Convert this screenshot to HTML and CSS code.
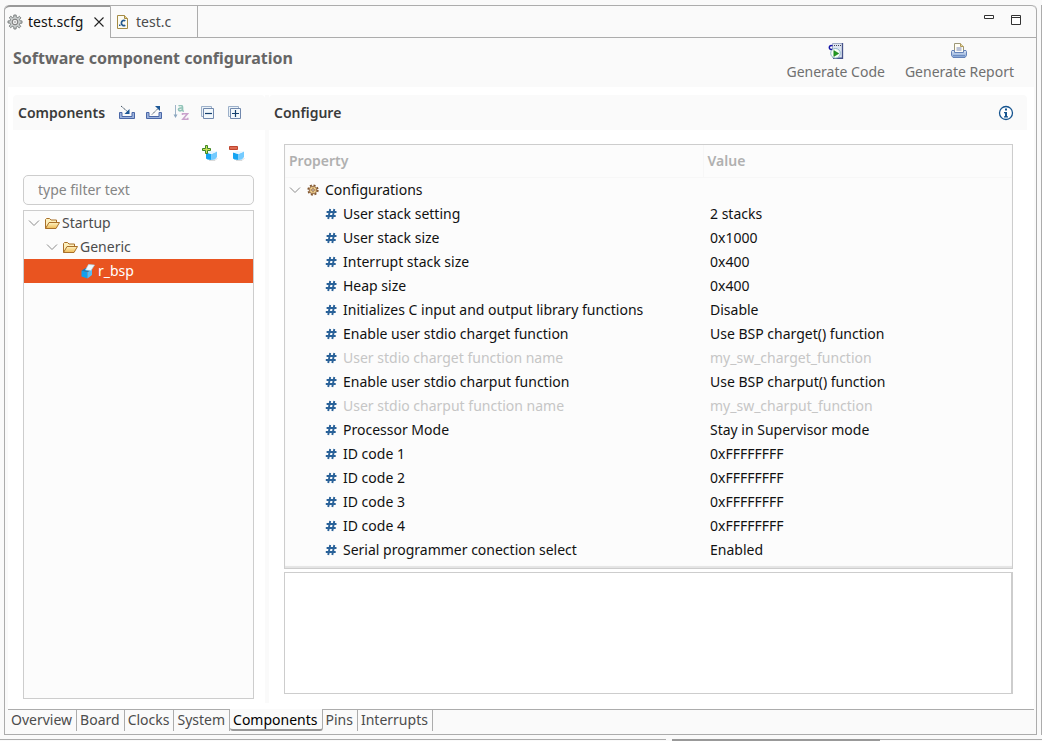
FILE: index.html
```html
<!DOCTYPE html>
<html lang="en">
<head>
<meta charset="utf-8">
<title>test.scfg</title>
<link rel="stylesheet" href="styles.css">
</head>
<body>
<svg class="defs" aria-hidden="true">
  <defs>
    <linearGradient id="folderFill" x1="0" y1="0" x2="0" y2="1"><stop offset="0" stop-color="#fff3c4"/><stop offset="1" stop-color="#eebb55"/></linearGradient>
    <linearGradient id="printFill" x1="0" y1="0" x2="0" y2="1"><stop offset="0" stop-color="#dfe8f6"/><stop offset="1" stop-color="#7d9fd2"/></linearGradient>
    <symbol id="chevron" viewBox="0 0 12 12"><path d="M1 3.5 6 8.5 11 3.5" fill="none" stroke="#8c8c8c"/></symbol>
    <symbol id="hash" viewBox="0 0 12 12"><path d="M5.200 1 3.200 11M9.300 1 7.300 11M1.600 4h9.900M.8 8h9.900" fill="none" stroke="#2a6299" stroke-width="1.900"/></symbol>
    <symbol id="folder" viewBox="0 0 16 16"><path d="M1.500 13.500v-9l1-1h3l1.500 1.500h5.500v2.500" fill="#fdf0bd" stroke="#a9702a"/><path d="M1.500 13.500 5 7.500h10.500l-3.500 6z" fill="url(#folderFill)" stroke="#a9702a"/></symbol>
    <symbol id="sheets-minus" viewBox="0 0 16 16"><path d="M4 11.500H1.500v-10h10V4" fill="#eaf2f8" stroke="#9db0c9"/><path d="M3.500 3.500h10v10h-10z" fill="#f2f8fc" stroke="#7188ad"/><path d="M5 8.500h7" stroke="#14406e" stroke-width="1.200"/></symbol>
    <symbol id="sheets-plus" viewBox="0 0 16 16"><path d="M4 11.500H1.500v-10h10V4" fill="#eaf2f8" stroke="#9db0c9"/><path d="M3.500 3.500h10v10h-10z" fill="#f2f8fc" stroke="#7188ad"/><path d="M5 8.500h7M8.500 5v7" stroke="#14406e" stroke-width="1.200"/></symbol>
    <symbol id="tray" viewBox="0 0 16 16"><path d="M.5 7.500h2.500v4h10v-4h2.500v6H.5z" fill="#9bb2dc" stroke="#4a67a6"/></symbol>
    <symbol id="box" viewBox="0 0 16 16"><path d="M4 7.500 9.500 9v6L5.500 14.500 4 13.500z" fill="#14a4f2"/><path d="m9.500 9 5.500-2.500V12l-2 2.500-3.500.5z" fill="#74cbff"/><path d="m4 7.500 4-1.500 7 .5L9.500 9z" fill="#e8f6ff"/><path d="M7 15.500h6l2.500-2.500" fill="none" stroke="#ccc" stroke-width=".7"/></symbol>
  </defs>
</svg>

<div class="workbench">
  <div class="upper">
    <main class="editor">
      <div class="tabbar">
        <div class="file-tab active">
          <svg class="icon" viewBox="0 0 16 16"><path d="M6.800 1h2.400v2l1.700.7 1.500-1.400 1.500 1.600-1.400 1.500.7 1.500H15v2.300h-2l-.6 1.600 1.400 1.500-1.600 1.600-1.500-1.400-1.600.7V15H6.900v-2l-1.700-.7-1.500 1.400-1.500-1.600 1.300-1.500L2.900 9H1V6.900h2l.6-1.700-1.400-1.400 1.600-1.600 1.500 1.400L6.800 3z" fill="#c9cdcd" stroke="#747979" stroke-width=".9"/><circle cx="8" cy="8" r="2.800" fill="#eee" stroke="#777"/><circle cx="8" cy="8" r=".8" fill="#888"/></svg>
          <span>test.scfg</span>
          <button class="plain" aria-label="Close"><svg class="close" viewBox="0 0 10 10"><path d="m.5.5 9 9m0-9-9 9" stroke="#222" stroke-width="1.100"/></svg></button>
        </div>
        <div class="file-tab">
          <svg class="icon" viewBox="0 0 16 16"><path d="M2.500 1.500h7l3 3v10h-10z" fill="#fcfbf2" stroke="#a48b45"/><path d="M9.500 1.500v3h3" fill="#e9d38c" stroke="#a48b45"/><path d="M10.300 6.900C8.200 5.500 6.400 7 6.400 9s1.800 3.500 3.900 2.200" fill="none" stroke="#24598f" stroke-width="1.700"/><path d="M4 10.500h1.500V12H4z" fill="#24598f"/></svg>
          <span>test.c</span>
        </div>
        <div class="tab-fill">
          <button class="plain" aria-label="Minimize"><svg class="win" viewBox="0 0 12 12"><path d="M1.500 1.500h9v3h-9z" fill="#fff" stroke="#333"/></svg></button>
          <button class="plain" aria-label="Maximize"><svg class="win" viewBox="0 0 12 12"><path d="M1.500 1.500h9v9h-9zM1 3.500h10" fill="#fff" stroke="#333"/></svg></button>
        </div>
      </div>

      <header class="form-head">
        <h1>Software component configuration</h1>
        <div class="actions">
          <button class="action">
            <svg class="icon" viewBox="0 0 16 16"><path d="M4.500.5h10v14h-10z" fill="#dce4f0" stroke="#a3acc8"/><path d="M14.500 0v15.500H5" fill="none" stroke="#46528a" stroke-width="1.300"/><path d="M6 2.500h7" stroke="#445" stroke-dasharray="1 1"/><path d="M4.500 3C3 2 1.300 2.800 1.300 4.500S3 7 4.500 6" fill="none" stroke="#1616a8" stroke-width="1.500"/><circle cx="7.500" cy="10.300" r="4.800" fill="#f7fff4" stroke="#8fb5c9"/><path d="m5.800 7.500 5 3-5 3z" fill="#219a1c" stroke="#0f7014" stroke-width=".5"/></svg>
            Generate Code
          </button>
          <button class="action">
            <svg class="icon" viewBox="0 0 16 16"><path d="M3.500 8.500v-8h6l3 3v5" fill="#fffdf4" stroke="#9c9676"/><path d="M9.500.5v3h3" fill="#ead99d" stroke="#b09a5c"/><path d="M5.500 5h5M5.500 7h5" stroke="#7486b8"/><path d="M1 7.500h2.500v2h9v-2H15l.5 1v4L14 14.500H2L.5 12.500v-4z" fill="url(#printFill)" stroke="#6583b9"/><path d="M2 12.500h12" stroke="#5c7cb5" stroke-width=".7"/></svg>
            Generate Report
          </button>
        </div>
      </header>

      <div class="form-body">
        <section class="pane components">
          <div class="section-head">
            <h2>Components</h2>
            <div class="tools">
              <button class="plain" aria-label="Import"><svg class="icon" viewBox="0 0 16 16"><use href="#tray"/><path d="m2 1 7 6" stroke="#456" stroke-dasharray="1.500 .5"/><path d="M10.500 4v5h-5z" fill="#1d5795"/></svg></button>
              <button class="plain" aria-label="Export"><svg class="icon" viewBox="0 0 16 16"><use href="#tray"/><path d="m6 9.500 6-6" stroke="#456" stroke-dasharray="1.500 .5"/><path d="M9 1h5v5z" fill="#1d5795"/></svg></button>
              <button class="plain" aria-label="Sort"><svg class="icon" viewBox="0 0 16 16"><path d="M2.500 0v11" stroke="#9fb4c8"/><path d="M.5 9.500h4l-2 3.500z" fill="#8aa5bf"/><path d="M5.500.8c3-.9 4-.2 4 1.700v3.500M9.500 3C7 2.800 5.500 3.400 5.500 4.600c0 1.800 2.500 1.500 4 .3M9.500 6.200h1.300" fill="none" stroke="#92c4b8" stroke-width="1.700"/><path d="M9.500 10V8.800h5L9.800 14.200h5V12.700" fill="none" stroke="#c9a3cc" stroke-width="1.500"/></svg></button>
              <button class="plain" aria-label="Collapse all"><svg class="icon"><use href="#sheets-minus"/></svg></button>
              <button class="plain" aria-label="Expand all"><svg class="icon"><use href="#sheets-plus"/></svg></button>
            </div>
          </div>
          <div class="pane-content">
            <div class="tools edit-tools">
              <button class="plain" aria-label="Add component"><svg class="icon" viewBox="0 0 16 16"><use href="#box"/><path d="M3.500.5h2V3.500H8.500v2h-3v3h-2v-3h-3v-2h3z" fill="#c6df55" stroke="#3f8726"/></svg></button>
              <button class="plain" aria-label="Remove component"><svg class="icon" viewBox="0 0 16 16"><use href="#box"/><path d="M.5 1.500h8v3h-8z" fill="#dd6a52" stroke="#bf452f"/></svg></button>
            </div>
            <input class="filter" type="text" placeholder="type filter text" aria-label="Filter components">
            <ul class="tree">
              <li class="node"><svg class="chev"><use href="#chevron"/></svg><svg class="icon"><use href="#folder"/></svg>Startup</li>
              <li class="node level-2"><svg class="chev"><use href="#chevron"/></svg><svg class="icon"><use href="#folder"/></svg>Generic</li>
              <li class="node level-3 selected"><svg class="icon" viewBox="0 0 16 16"><path d="m1.500 7.500 6 1.500v6.500l-6-2z" fill="#12a0ec"/><path d="m7.500 9 4.500-2.500V12l-4.500 3.500z" fill="#55bdf6"/><path d="m1.500 7.500 4.500-2.500 6 1.500L7.500 9z" fill="#0b7fc4"/><path d="M5.500 7 8.500 1.500 14.500 2 11 7.500z" fill="#eef9ff" stroke="#a8dcf7" stroke-width=".6"/></svg>r_bsp</li>
            </ul>
          </div>
        </section>

        <div class="sash"></div>

        <section class="pane configure">
          <div class="section-head">
            <h2>Configure</h2>
            <button class="plain" aria-label="Help"><svg class="icon" viewBox="0 0 16 16"><circle cx="8" cy="8" r="6.500" fill="#fff" stroke="#16548f" stroke-width="1.300"/><path d="M7 3.500h2v2H7zM6 7h3v4.200h1v1.300H6v-1.300h1V8.300H6z" fill="#16548f"/></svg></button>
          </div>
          <div class="pane-content">
            <div class="grid-box">
              <table class="props">
                <thead><tr><th class="name">Property</th><th>Value</th></tr></thead>
                <tbody>
                  <tr><td><div class="cell group"><svg class="chev"><use href="#chevron"/></svg><svg class="cog" viewBox="0 0 12 12"><circle cx="6" cy="6" r="4.800" fill="none" stroke="#81552d" stroke-width="1.700" stroke-dasharray="2 1.770"/><circle cx="6" cy="6" r="3.800" fill="#efd293" stroke="#7d5130" stroke-width=".8"/><path d="M6 2.500v7M2.500 6h7" stroke="#a87a42" stroke-width=".6"/><circle cx="6" cy="6" r="1.200" fill="#fff" stroke="#7d5130" stroke-width=".8"/></svg>Configurations</div></td><td></td></tr>
                  <tr><td><div class="cell"><svg class="hash"><use href="#hash"/></svg>User stack setting</div></td><td>2 stacks</td></tr>
                  <tr><td><div class="cell"><svg class="hash"><use href="#hash"/></svg>User stack size</div></td><td>0x1000</td></tr>
                  <tr><td><div class="cell"><svg class="hash"><use href="#hash"/></svg>Interrupt stack size</div></td><td>0x400</td></tr>
                  <tr><td><div class="cell"><svg class="hash"><use href="#hash"/></svg>Heap size</div></td><td>0x400</td></tr>
                  <tr><td><div class="cell"><svg class="hash"><use href="#hash"/></svg>Initializes C input and output library functions</div></td><td>Disable</td></tr>
                  <tr><td><div class="cell"><svg class="hash"><use href="#hash"/></svg>Enable user stdio charget function</div></td><td>Use BSP charget() function</td></tr>
                  <tr class="off"><td><div class="cell"><svg class="hash"><use href="#hash"/></svg>User stdio charget function name</div></td><td>my_sw_charget_function</td></tr>
                  <tr><td><div class="cell"><svg class="hash"><use href="#hash"/></svg>Enable user stdio charput function</div></td><td>Use BSP charput() function</td></tr>
                  <tr class="off"><td><div class="cell"><svg class="hash"><use href="#hash"/></svg>User stdio charput function name</div></td><td>my_sw_charput_function</td></tr>
                  <tr><td><div class="cell"><svg class="hash"><use href="#hash"/></svg>Processor Mode</div></td><td>Stay in Supervisor mode</td></tr>
                  <tr><td><div class="cell"><svg class="hash"><use href="#hash"/></svg>ID code 1</div></td><td>0xFFFFFFFF</td></tr>
                  <tr><td><div class="cell"><svg class="hash"><use href="#hash"/></svg>ID code 2</div></td><td>0xFFFFFFFF</td></tr>
                  <tr><td><div class="cell"><svg class="hash"><use href="#hash"/></svg>ID code 3</div></td><td>0xFFFFFFFF</td></tr>
                  <tr><td><div class="cell"><svg class="hash"><use href="#hash"/></svg>ID code 4</div></td><td>0xFFFFFFFF</td></tr>
                  <tr><td><div class="cell"><svg class="hash"><use href="#hash"/></svg>Serial programmer conection select</div></td><td>Enabled</td></tr>
                  <tr><td><div class="cell"><svg class="hash"><use href="#hash"/></svg>ROM cache enable setting</div></td><td>Disabled</td></tr>
                </tbody>
              </table>
            </div>
            <div class="description"></div>
          </div>
        </section>
      </div>

      <nav class="pages">
        <a href="#overview">Overview</a><a href="#board">Board</a><a href="#clocks">Clocks</a><a href="#system">System</a><a class="current" href="#components">Components</a><a href="#pins">Pins</a><a href="#interrupts">Interrupts</a>
      </nav>
    </main>
    <div class="side"></div>
  </div>
  <div class="lower"><div class="lower-left"></div><div class="lower-tab"></div><div class="lower-fill"></div></div>
</div>
</body>
</html>
```

FILE: styles.css
```css
* { box-sizing: border-box; }

body {
  margin: 0;
  background: #fafafa;
  color: #4c4c4c;
  font: 14px/24px "Noto Sans", "Open Sans", sans-serif;
}

h1, h2 { margin: 0; font-weight: 600; }

svg { display: block; flex: none; }
.defs { position: absolute; width: 0; height: 0; }
.icon { width: 16px; height: 16px; }
.chev, .hash, .cog, .win { width: 12px; height: 12px; }
.close { width: 10px; height: 10px; }

.plain, .action {
  padding: 0;
  border: 0;
  background: none;
  color: inherit;
  font: inherit;
}

.workbench { display: flex; flex-direction: column; height: 100vh; overflow: hidden; }
.upper { display: flex; flex: 1; gap: 4px; min-height: 0; padding: 5px 0 4px 4px; }

.editor {
  display: flex;
  flex: 1;
  flex-direction: column;
  min-width: 0;
  border: 1px solid #acacac;
  border-top: 0;
  border-radius: 5px 5px 0 0;
}

.side { width: 1px; background: #acacac; }

.tabbar { display: flex; height: 33px; }
.file-tab {
  display: flex;
  align-items: center;
  gap: 5px;
  width: 87px;
  padding-left: 4px;
  border: solid #acacac;
  border-width: 1px 1px 1px 0;
}
.file-tab.active {
  width: 106px;
  padding: 0 0 2px 2px;
  border-top: 2px solid #999;
  border-bottom: 0;
  border-top-left-radius: 5px;
  color: #111;
}
.file-tab.active .plain { margin-left: 6px; }
.tab-fill {
  display: flex;
  flex: 1;
  align-items: center;
  justify-content: flex-end;
  gap: 15px;
  padding: 0 14px 4px 0;
  border: solid #acacac;
  border-width: 1px 0;
  border-top-right-radius: 5px;
}

.form-head { display: flex; justify-content: space-between; height: 49px; padding: 5px 22px 0 8px; }
.form-head h1 { padding-top: 3px; color: #666; font-size: 16px; font-weight: 700; }
.actions { display: flex; gap: 20px; }
.action {
  display: flex;
  flex-direction: column;
  gap: 1px;
  align-items: center;
  color: #707070;
}

.form-body { display: flex; flex: 1; min-height: 0; margin: 0 2px 0 3px; padding: 8px 7px 6px 5px; background: #fff; }
.pane { display: flex; flex-direction: column; min-width: 0; }
.components { width: 252px; }
.configure { flex: 1; }
.sash { width: 4px; background: #fafafa; }

.section-head {
  display: flex;
  align-items: center;
  height: 35px;
  padding: 0 13px 0 5px;
  border-radius: 4px 4px 0 0;
  background: #fafafa;
}
.section-head h2 { color: #3a3a3a; font-size: 14px; }
.components .section-head { gap: 14px; }
.configure .section-head { justify-content: space-between; }
.tools { display: flex; gap: 11px; }

.pane-content { display: flex; flex: 1; flex-direction: column; min-height: 0; }
.components .pane-content { padding: 15px 11px 4px 10px; }
.configure .pane-content { gap: 3px; padding: 14px 14px 9px 15px; }

.edit-tools { justify-content: flex-end; padding-right: 9px; }
.filter {
  height: 30px;
  margin: 14px 0 5px;
  padding: 0 14px 2px;
  border: 1px solid #cdcdcd;
  border-radius: 5px;
  background: #fcfcfc;
  color: #444;
  font: inherit;
}
.filter::placeholder { color: #858585; opacity: 1; }

.tree {
  flex: 1;
  min-height: 0;
  margin: 0;
  padding: 0;
  border: 1px solid #cdcdcd;
  background: #fcfcfc;
  list-style: none;
}
.node { display: flex; align-items: center; height: 24px; padding-left: 4px; }
.node .chev { margin-right: 4px; }
.node .icon { margin-right: 2px; }
.level-2 { padding-left: 22px; }
.level-3 { padding-left: 56px; }
.selected { background: #e95420; color: #fff; }

.grid-box {
  flex: 1;
  min-height: 0;
  overflow: hidden;
  border: 1px solid #cdcdcd;
  background: #fcfcfc;
  box-shadow: inset 0 -2px 1px #e4e4e4;
}
.props { width: 100%; border-collapse: collapse; table-layout: fixed; color: #111; }
.props th {
  height: 32px;
  padding: 0 5px 0 4px;
  border-bottom: 1px solid #f7f7f7;
  color: #b0b0b0;
  font-weight: 600;
  text-align: left;
}
.props .name { width: 418px; border-right: 1px solid #f7f7f7; }
.props td { height: 24px; padding: 0 0 0 7px; white-space: nowrap; }
.props td:first-child { padding: 0; }
.cell { display: flex; align-items: center; gap: 6px; padding-left: 40px; }
.cell.group { padding-left: 4px; }
.off { color: #c6c6c6; }

.description { height: 122px; border: 1px solid #cdcdcd; border-right-width: 2px; background: #fff; }

.pages { display: flex; height: 25px; margin: 0 2px 0 3px; border-top: 1px solid #acacac; }
.pages a {
  height: 21px;
  padding: 0 4px 0 3px;
  border-right: 1px solid #acacac;
  color: #4c4c4c;
  line-height: 20px;
  text-decoration: none;
}
.pages .current {
  height: 22px;
  margin-top: -1px;
  border-bottom: 2px solid #999;
  border-radius: 0 0 3px 3px;
  background: #fafafa;
  color: #000;
  line-height: 22px;
}

.lower { display: flex; height: 2px; }
.lower-left { flex: 666; margin-right: 6px; border-top: 1px solid #acacac; }
.lower-tab { flex: 208; background: #999; }
.lower-fill { flex: 162; border-top: 1px solid #acacac; }
```
